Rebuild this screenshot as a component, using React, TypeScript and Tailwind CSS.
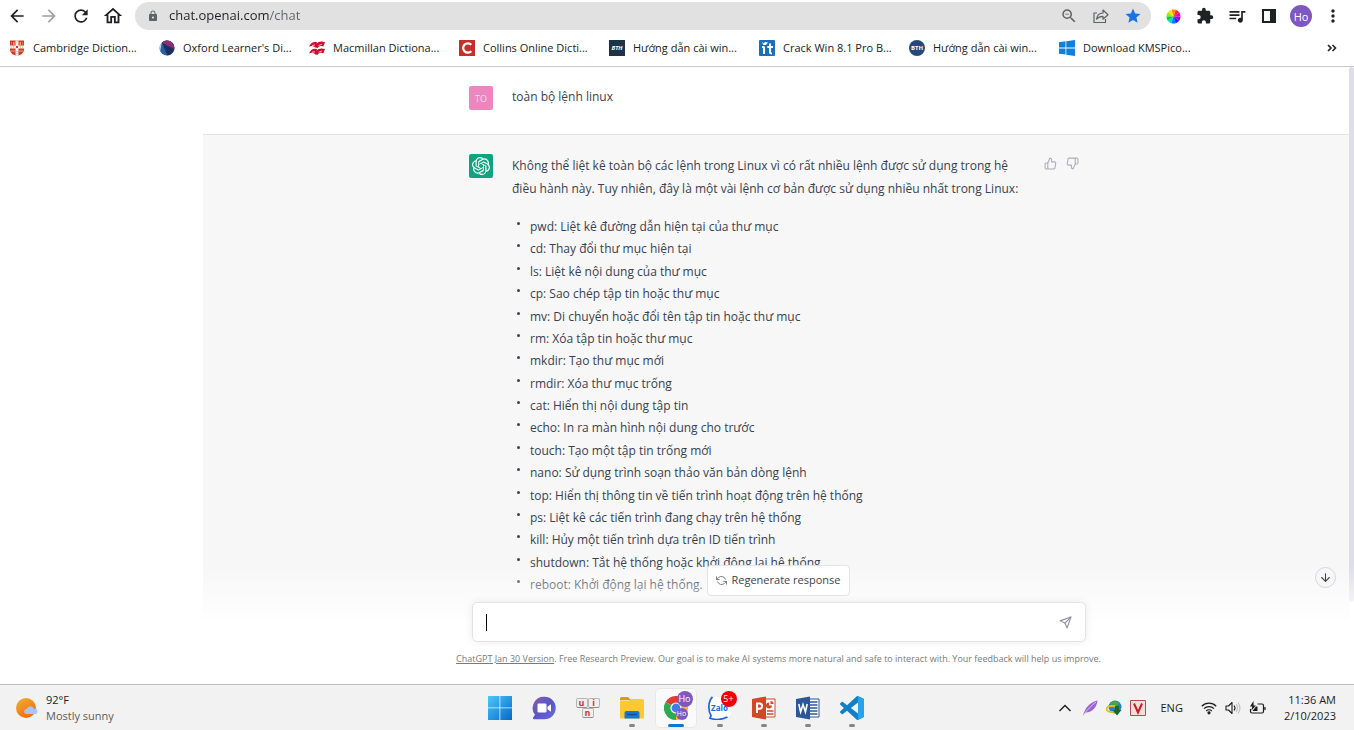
import type { ReactNode } from "react";
import {
  MdArrowBack,
  MdArrowForward,
  MdRefresh,
  MdOutlineHome,
  MdLock,
  MdStar,
  MdExtension,
  MdQueueMusic,
  MdMoreVert,
  MdZoomOut,
} from "react-icons/md";
import { FiThumbsUp, FiThumbsDown, FiSend, FiArrowDown, FiRefreshCw } from "react-icons/fi";

const OPENAI_PATH =
  "M22.2819 9.8211a5.9847 5.9847 0 0 0-.5157-4.9108 6.0462 6.0462 0 0 0-6.5098-2.9A6.0651 6.0651 0 0 0 4.9807 4.1818a5.9847 5.9847 0 0 0-3.9977 2.9 6.0462 6.0462 0 0 0 .7427 7.0966 5.98 5.98 0 0 0 .511 4.9107 6.051 6.051 0 0 0 6.5146 2.9001A5.9847 5.9847 0 0 0 13.2599 24a6.0557 6.0557 0 0 0 5.7718-4.2058 5.9894 5.9894 0 0 0 3.9977-2.9001 6.0557 6.0557 0 0 0-.7475-7.0729zm-9.022 12.6081a4.4755 4.4755 0 0 1-2.8764-1.0408l.1419-.0804 4.7783-2.7582a.7948.7948 0 0 0 .3927-.6813v-6.7369l2.02 1.1686a.071.071 0 0 1 .038.052v5.5826a4.504 4.504 0 0 1-4.4945 4.4944zm-9.6607-4.1254a4.4708 4.4708 0 0 1-.5346-3.0137l.142.0852 4.783 2.7582a.7712.7712 0 0 0 .7806 0l5.8428-3.3685v2.3324a.0804.0804 0 0 1-.0332.0615L9.74 19.9502a4.4992 4.4992 0 0 1-6.1408-1.6464zM2.3408 7.8956a4.485 4.485 0 0 1 2.3655-1.9728V11.6a.7664.7664 0 0 0 .3879.6765l5.8144 3.3543-2.0201 1.1685a.0757.0757 0 0 1-.071 0l-4.8303-2.7865A4.504 4.504 0 0 1 2.3408 7.872zm16.5963 3.8558L13.1038 8.364 15.1192 7.2a.0757.0757 0 0 1 .071 0l4.8303 2.7913a4.4944 4.4944 0 0 1-.6765 8.1042v-5.6772a.79.79 0 0 0-.407-.667zm2.0107-3.0231l-.142-.0852-4.7735-2.7818a.7759.7759 0 0 0-.7854 0L9.409 9.2297V6.8974a.0662.0662 0 0 1 .0284-.0615l4.8303-2.7866a4.4992 4.4992 0 0 1 6.6802 4.66zM8.3065 12.863l-2.02-1.1638a.0804.0804 0 0 1-.038-.0567V6.0742a4.4992 4.4992 0 0 1 7.3757-3.4537l-.142.0805L8.704 5.459a.7948.7948 0 0 0-.3927.6813zm1.0976-2.3654l2.602-1.4998 2.6069 1.4998v2.9994l-2.5974 1.4997-2.6067-1.4997Z";

const VSCODE_PATH =
  "M23.15 2.587L18.21.21a1.494 1.494 0 0 0-1.705.29l-9.46 8.63-4.12-3.128a.999.999 0 0 0-1.276.057L.327 7.261A1 1 0 0 0 .326 8.74L3.899 12 .326 15.26a1 1 0 0 0 .001 1.479L1.65 17.94a.999.999 0 0 0 1.276.057l4.12-3.128 9.46 8.63a1.492 1.492 0 0 0 1.704.29l4.942-2.377A1.5 1.5 0 0 0 24 20.06V3.939a1.5 1.5 0 0 0-.85-1.352zm-5.146 14.861L10.826 12l7.178-5.448v10.896z";

function CambridgeIcon() {
  return (
    <svg viewBox="0 0 16 16" className="size-4">
      <path d="M1 .5h14V9c0 4-3 6-7 7-4-1-7-3-7-7z" fill="#cf3a2c" />
      <path d="M2.5 2h3v3h-3zM10.500 2h3v3h-3zM2.500 10h3v2h-3zM10.500 10h3v2h-3z" fill="#eeb04a" />
      <path d="M3.500 2v3M12.500 2v3M4 10v2M12 10v2" stroke="#cf3a2c" />
      <path d="M6.500.500h3v5H15v3H9.500v7L8 16l-1.500-.5v-7H1v-3h5.500z" fill="#f6efec" />
      <path d="M8 1.500v2M8 11v3M2 7h3M11 7h3" stroke="#b9aaa8" strokeDasharray="1 1" />
      <path d="M7 6h2v2H7z" fill="#cf3a2c" />
    </svg>
  );
}

function OxfordIcon() {
  return (
    <svg viewBox="0 0 16 16" className="size-4">
      <circle cx="8" cy="8" r="7.500" fill="#2b5f9e" />
      <path d="M3 2.400A7.500 7.500 0 0 1 14.300 12L13 13z" fill="#6b2a6c" />
      <path d="M3 2.400 5 4l9 4 1.200-2.500A7.500 7.500 0 0 0 3 2.400z" fill="#8a2f74" />
      <path d="M5 4 13 13 14.500 9z" fill="#1c2d5c" />
      <path d="M3 2.400 8.500 15.500A7.500 7.500 0 0 0 13 13L5 4z" fill="#16305f" />
      <path d="M2.800 2.600a7.500 7.500 0 0 0-1.600 8.600z" fill="#b7d3ea" />
    </svg>
  );
}

function MacmillanIcon() {
  return (
    <svg viewBox="0 0 16 16" className="size-4" fill="#c8102e">
      <path d="M0 6.800C1.500 3 4 1.200 8 2.200L7.600 4C9.500 1.600 12 1 16 2.200L14.300 6.600C12 5.600 10.300 6 8.600 8L6.300 7.600C4.300 5.800 2 5.600 0 6.800z" />
      <path d="M0 13.600C1.500 9.800 4 8 8 9l-.4 1.800C9.500 8.400 12 7.800 16 9l-1.700 4.400c-2.300-1-4-.6-5.700 1.400l-2.300-.4C4.300 12.600 2 12.400 0 13.600z" />
      <path d="M3 5.400 6 5M9.500 5.600 13 4.200M3 12.200 6 11.800M9.500 12.400 13 11" stroke="#fff" strokeWidth=".7" />
    </svg>
  );
}

function CollinsIcon() {
  return (
    <svg viewBox="0 0 16 16" className="size-4">
      <path fill="#c62f29" d="M0 0h16v16H0z" />
      <path d="M12.300 4.800A4.700 4.700 0 1 0 12.300 11.200" fill="none" stroke="#fff" strokeWidth="2.200" />
    </svg>
  );
}

function BthSquareIcon() {
  return (
    <span className="flex size-4 items-center justify-center bg-[#1f3347] text-[6px] leading-none font-bold text-white italic">
      BTH
    </span>
  );
}

function BthRoundIcon() {
  return (
    <span className="flex size-4 items-center justify-center rounded-full bg-[#27497a] text-[6px] leading-none font-bold text-white">
      BTH
    </span>
  );
}

function CrackIcon() {
  return (
    <svg viewBox="0 0 16 16" className="size-4">
      <rect width="16" height="16" rx="1" fill="#1a6fb8" />
      <path d="M5 6.500V14M11 3.500V12q0 1.500 2 1.500M8.300 7H14M3 7h2" stroke="#fff" strokeWidth="2" fill="none" />
      <path d="M2.500 1.500 4.500 3.500 6 2l3 .5-2 2.500H4.500z" fill="#fff" />
    </svg>
  );
}

function Windows10Icon() {
  return (
    <svg viewBox="0 0 16 16" className="size-4" fill="#0f7fdc">
      <path d="M0 2.200 6.500 1.300v6.200H0zM7.300 1.200 16 0v7.500H7.300zM0 8.400h6.500v6.200L0 13.700zM7.300 8.400H16V16l-8.700-1.200z" />
    </svg>
  );
}

const bookmarks: { label: string; icon: ReactNode }[] = [
  { label: "Cambridge Diction...", icon: <CambridgeIcon /> },
  { label: "Oxford Learner's Di...", icon: <OxfordIcon /> },
  { label: "Macmillan Dictiona...", icon: <MacmillanIcon /> },
  { label: "Collins Online Dicti...", icon: <CollinsIcon /> },
  { label: "Hướng dẫn cài win...", icon: <BthSquareIcon /> },
  { label: "Crack Win 8.1 Pro B...", icon: <CrackIcon /> },
  { label: "Hướng dẫn cài win...", icon: <BthRoundIcon /> },
  { label: "Download KMSPico...", icon: <Windows10Icon /> },
];

function ToolButton({ label, children }: { label: string; children: ReactNode }) {
  return (
    <button type="button" aria-label={label} className="flex size-8 shrink-0 items-center justify-center">
      {children}
    </button>
  );
}

function ShareIcon() {
  return (
    <svg viewBox="0 0 18 18" className="size-[18px]" fill="none" stroke="#5f6368" strokeWidth="1.200">
      <path d="M5 6H2v9.500h11.500V12" />
      <path d="M4.500 12.200C5 8.500 7.500 6.200 11 6V3l5 4.700-5 4.500V9.300c-3 0-5 .9-6.500 2.900z" strokeLinejoin="round" />
    </svg>
  );
}

function ColorWheelIcon() {
  const colors = ["#f000c0", "#ff2a2a", "#ff8a00", "#ffe600", "#8cf000", "#00d42a", "#00d8d8", "#0078ff", "#2a1fff", "#9a00ff"];
  return (
    <svg viewBox="-8 -8 16 16" className="size-[15px]">
      {colors.map((color, i) => {
        const a = (i * Math.PI) / 5;
        const b = ((i + 1) * Math.PI) / 5;
        return (
          <path
            key={color}
            fill={color}
            d={`M0 0L${Math.cos(a) * 7.5} ${Math.sin(a) * -7.5}A7.500 7.500 0 0 0 ${Math.cos(b) * 7.5} ${Math.sin(b) * -7.5}z`}
          />
        );
      })}
    </svg>
  );
}

function BrowserHeader() {
  return (
    <header className="shrink-0 border-b border-[#c8c8c8] bg-white">
      <div className="flex h-8 items-center pr-[5px] pl-px text-[#202124]">
        <ToolButton label="Back">
          <MdArrowBack className="size-5" />
        </ToolButton>
        <ToolButton label="Forward">
          <MdArrowForward className="size-5 text-[#9aa0a6]" />
        </ToolButton>
        <ToolButton label="Reload">
          <MdRefresh className="size-5" />
        </ToolButton>
        <ToolButton label="Home">
          <MdOutlineHome className="size-[22px]" />
        </ToolButton>
        <div className="mx-1.5 flex h-7 min-w-0 flex-1 items-center rounded-full bg-[#e1e1e1] pr-0.5 pl-3">
          <MdLock className="size-3 shrink-0 text-[#5f6368]" />
          <input
            aria-label="Address"
            defaultValue="chat.openai.com/chat"
            className="ml-2.5 min-w-0 flex-1 bg-linear-to-r from-[#202124] from-[101px] to-[#5f6368] to-[101px] bg-clip-text text-[13px] text-transparent outline-none"
          />
          <ToolButton label="Zoom">
            <MdZoomOut className="size-[18px] text-[#5f6368]" />
          </ToolButton>
          <ToolButton label="Share this page">
            <ShareIcon />
          </ToolButton>
          <ToolButton label="Edit bookmark">
            <MdStar className="size-[18px] text-[#1a73e8]" />
          </ToolButton>
        </div>
        <ToolButton label="Color picker">
          <ColorWheelIcon />
        </ToolButton>
        <ToolButton label="Extensions">
          <MdExtension className="size-[18px]" />
        </ToolButton>
        <ToolButton label="Media controls">
          <MdQueueMusic className="size-5" />
        </ToolButton>
        <ToolButton label="Side panel">
          <svg viewBox="0 0 14 14" className="size-3.5">
            <path d="M0 0h14v14H0zM2 2v10h6V2z" fill="currentColor" fillRule="evenodd" />
          </svg>
        </ToolButton>
        <ToolButton label="Profile">
          <span className="flex size-[22px] items-center justify-center rounded-full bg-[#7e57c2] text-[11px] leading-none text-white">
            Ho
          </span>
        </ToolButton>
        <ToolButton label="More">
          <MdMoreVert className="size-5" />
        </ToolButton>
      </div>
      <nav aria-label="Bookmarks" className="flex h-[34px] items-center pr-[17px] pb-0.5 pl-[9px]">
        {bookmarks.map((b, i) => (
          <a key={i} href="#" className="flex w-[150px] shrink-0 items-center gap-2 text-[11px] whitespace-nowrap text-[#202124]">
            {b.icon}
            {b.label}
          </a>
        ))}
        <button type="button" aria-label="More bookmarks" className="ml-auto">
          <svg viewBox="0 0 10 8" className="h-2 w-2.5" fill="none" stroke="#202124" strokeWidth="1.600">
            <path d="m1 1 3 3-3 3M5.500 1l3 3-3 3" />
          </svg>
        </button>
      </nav>
    </header>
  );
}

const commands = [
  "pwd: Liệt kê đường dẫn hiện tại của thư mục",
  "cd: Thay đổi thư mục hiện tại",
  "ls: Liệt kê nội dung của thư mục",
  "cp: Sao chép tập tin hoặc thư mục",
  "mv: Di chuyển hoặc đổi tên tập tin hoặc thư mục",
  "rm: Xóa tập tin hoặc thư mục",
  "mkdir: Tạo thư mục mới",
  "rmdir: Xóa thư mục trống",
  "cat: Hiển thị nội dung tập tin",
  "echo: In ra màn hình nội dung cho trước",
  "touch: Tạo một tập tin trống mới",
  "nano: Sử dụng trình soạn thảo văn bản dòng lệnh",
  "top: Hiển thị thông tin về tiến trình hoạt động trên hệ thống",
  "ps: Liệt kê các tiến trình đang chạy trên hệ thống",
  "kill: Hủy một tiến trình dựa trên ID tiến trình",
  "shutdown: Tắt hệ thống hoặc khởi động lại hệ thống",
  "reboot: Khởi động lại hệ thống.",
];

function Conversation() {
  return (
    <div className="min-w-0 flex-1 text-[12px] leading-[23px] text-[#374151]">
      <section className="border-b border-[#e2e2e2] pt-[19px] pb-6">
        <div className="mx-auto flex max-w-[614px] gap-[19px]">
          <div className="flex size-6 shrink-0 items-center justify-center rounded-xs bg-[#ec86bf] text-[9px] leading-none text-[#fbdcee]">
            TO
          </div>
          <p className="leading-[22px]">toàn bộ lệnh linux</p>
        </div>
      </section>
      <section className="bg-[#f7f7f7] pt-[19px] pb-40">
        <div className="mx-auto flex max-w-[614px]">
          <div className="mr-[19px] flex size-6 shrink-0 items-center justify-center rounded-xs bg-[#10a37f]">
            <svg viewBox="0 0 24 24" className="size-[18px]" fill="#fff">
              <path d={OPENAI_PATH} />
            </svg>
          </div>
          <div className="min-w-0 flex-1">
            <p>
              Không thể liệt kê toàn bộ các lệnh trong Linux vì có rất nhiều lệnh được sử dụng trong hệ
              <br />
              điều hành này. Tuy nhiên, đây là một vài lệnh cơ bản được sử dụng nhiều nhất trong Linux:
            </p>
            <ul className="mt-4 flex h-[380px] flex-col justify-between pl-[5px] leading-[22px]">
              {commands.map((c) => (
                <li key={c} className="flex gap-2.5">
                  <span className="mt-1.5 size-[3px] shrink-0 rounded-full bg-[#374151]" />
                  {c}
                </li>
              ))}
            </ul>
          </div>
          <div className="mt-[3px] mr-1 ml-4 flex items-start gap-[9px] text-[#acacbe]">
            <button type="button" aria-label="Good response">
              <FiThumbsUp className="size-[13px]" />
            </button>
            <button type="button" aria-label="Bad response">
              <FiThumbsDown className="size-[13px]" />
            </button>
          </div>
        </div>
      </section>
    </div>
  );
}

function Composer() {
  return (
    <div className="absolute inset-x-0 bottom-0 flex flex-col items-center bg-linear-to-b from-white/0 from-12% to-white to-55% pb-[17px]">
      <button
        type="button"
        className="mt-4 mb-1.5 flex h-[31px] items-center gap-1 rounded border border-[#e3e3e8] bg-white px-2 text-[11px] text-[#40414f]"
      >
        <FiRefreshCw className="size-[11px] -scale-x-100 text-[#6e6e80]" />
        Regenerate response
      </button>
      <div className="relative flex h-10 w-full max-w-[614px] items-center rounded-[5px] border border-[#e3e3e3] bg-white pr-[13px] pl-[13px] shadow-[0_0_8px_rgba(0,0,0,0.08)]">
        <textarea aria-label="Message" rows={1} className="h-5 flex-1 resize-none text-[12px] leading-5 outline-none" />
        <span className="absolute top-[11px] left-[13px] h-[17px] w-px bg-black" />
        <button type="button" aria-label="Send">
          <FiSend className="size-[13px] text-[#8e8ea0]" />
        </button>
      </div>
      <p className="mt-2 text-center text-[9px] leading-[17px] text-[#7a7a7a]">
        <a href="#" className="underline">
          ChatGPT Jan 30 Version
        </a>
        . Free Research Preview. Our goal is to make AI systems more natural and safe to interact with. Your feedback will help us
        improve.
      </p>
      <button
        type="button"
        aria-label="Scroll to bottom"
        className="absolute right-[18px] bottom-24 flex size-[21px] items-center justify-center rounded-full border border-[#d5d5de] bg-[#f7f7f8] text-[#40414f]"
      >
        <FiArrowDown className="size-[13px]" />
      </button>
    </div>
  );
}

function StartIcon() {
  return (
    <svg viewBox="0 0 24 24" className="size-6">
      <defs>
        <linearGradient id="start" x1="0" y1="0" x2="1" y2="1">
          <stop offset="0" stopColor="#4cc9fb" />
          <stop offset="1" stopColor="#0568c8" />
        </linearGradient>
      </defs>
      <path d="M0 0h11.500v11.500H0zM12.300 0H24v11.500H12.300zM0 12.300h11.500V24H0zM12.300 12.300H24V24H12.300z" fill="url(#start)" />
    </svg>
  );
}

function MeetIcon() {
  return (
    <svg viewBox="0 0 24 24" className="size-6">
      <defs>
        <linearGradient id="meet" x1="0" y1="0" x2="1" y2="1">
          <stop offset="0" stopColor="#8a5fa8" />
          <stop offset=".5" stopColor="#5a55c8" />
          <stop offset="1" stopColor="#6a6ae0" />
        </linearGradient>
      </defs>
      <path d="M12.500.8a11.200 11.200 0 1 1 0 22.400H1.800q-1.500-.6-.5-2l1.700-2.400A11.200 11.200 0 0 1 12.500.8z" fill="url(#meet)" />
      <rect x="5.500" y="7.500" width="9" height="9" rx="1.200" fill="#fff" />
      <path d="m15.500 10.800 3.500-2.500v7.400l-3.500-2.500z" fill="#fff" />
    </svg>
  );
}

function UnikeyIcon() {
  return (
    <span className="grid w-6 grid-cols-4 text-center text-[9px] leading-[8px] font-bold text-[#d93636]">
      <span className="col-span-2 rounded-xs border border-[#b5b5b5] border-b-[#8c8c8c] bg-[#efefef]">u</span>
      <span className="col-span-2 rounded-xs border border-[#b5b5b5] border-b-[#8c8c8c] bg-[#efefef]">i</span>
      <span className="col-span-2 col-start-2 rounded-xs border border-[#b5b5b5] border-b-[#8c8c8c] bg-[#efefef]">n</span>
    </span>
  );
}

function FolderIcon() {
  return (
    <svg viewBox="0 0 24 24" className="size-6">
      <path d="M0 2.500Q0 1 1.500 1H8l3 3H0z" fill="#d99a0b" />
      <path d="M0 4.500h9L11 3h11.500Q24 3 24 4.500v17q0 1-1 1H1q-1 0-1-1z" fill="#fcc934" />
      <path d="M4.500 22.500V17q0-2 2-2h11q2 0 2 2v5.500z" fill="#1479d2" />
      <path d="M7 18.500h10" stroke="#0b519c" strokeWidth="1.500" />
    </svg>
  );
}

function ChromeIcon() {
  return (
    <span className="relative size-6">
      <svg viewBox="0 0 24 24" className="size-6">
        <path d="M12 12 1.600 6A12 12 0 0 1 22.400 6z" fill="#e33b2e" />
        <path d="M12 12V24A12 12 0 0 1 1.600 6z" fill="#2da94f" />
        <path d="M12 12 22.400 6A12 12 0 0 1 12 24z" fill="#fdbd00" />
        <path d="M12 6.500h10.700L12 12z" fill="#e33b2e" />
        <circle cx="12" cy="12" r="5.600" fill="#fff" />
        <circle cx="12" cy="12" r="4.400" fill="#3f7de8" />
      </svg>
      <span className="absolute -top-[5px] left-[13px] flex size-4 items-center justify-center rounded-full bg-[#7e57c2] text-[9px] leading-none text-white">
        Ho
      </span>
      <span className="absolute top-3 left-3 flex size-3 items-center justify-center rounded-full bg-[#7e57c2] text-[7px] leading-none text-white">
        Ho
      </span>
    </span>
  );
}

function ZaloIcon() {
  return (
    <span className="relative flex size-6 items-center justify-center">
      <svg viewBox="0 0 24 24" className="absolute inset-0 size-6">
        <rect x="1" y="1" width="22.500" height="21" rx="7" fill="#fff" />
        <path d="M4.500 1C0 5 0 15 3 19.500L2 22.300q9 3 17.500-1.300" fill="none" stroke="#1668e8" strokeWidth="1.700" />
      </svg>
      <span className="relative text-[8px] leading-none font-bold text-[#1668e8]">Zalo</span>
      <span className="absolute -top-[5px] left-[13px] flex size-4 items-center justify-center rounded-full bg-[#f40000] text-[9px] leading-none text-white">
        5+
      </span>
    </span>
  );
}

function PowerPointIcon() {
  return (
    <svg viewBox="0 0 24 24" className="size-6">
      <path d="M12 3h11v18H12z" fill="#fff" stroke="#d24726" />
      <path d="M17 6.500a3 3 0 1 0 3 3h-3z" fill="#d24726" />
      <path d="M18.500 5v3h3a3 3 0 0 0-3-3z" fill="#d24726" />
      <path d="M15 15h6.500M15 18h6.500" stroke="#d24726" strokeWidth="1.300" />
      <path d="M0 3 14 .5v23L0 21z" fill="#d24726" />
      <path d="M5 17V7.500h2.500a2.600 2.600 0 0 1 0 5.200H5" fill="none" stroke="#fff" strokeWidth="2" />
    </svg>
  );
}

function WordIcon() {
  return (
    <svg viewBox="0 0 24 24" className="size-6">
      <path d="M12 3h11v18H12z" fill="#fff" stroke="#2b579a" />
      <path d="M14 6h7.500M14 9h7.500M14 12h7.500M14 15h7.500M14 18h7.500" stroke="#2b579a" strokeWidth="1.300" />
      <path d="M0 3 14 .5v23L0 21z" fill="#2b579a" />
      <path d="m2.800 8 1.800 8L7 8.500 9.400 16l1.800-8" fill="none" stroke="#fff" strokeWidth="1.600" />
    </svg>
  );
}

function VsCodeIcon() {
  return (
    <svg viewBox="0 0 24 24" className="size-6">
      <path d={VSCODE_PATH} fill="#1180c8" />
      <path d="M18 .2 23.150 2.600q.85.400.85 1.400v16q0 1-.85 1.400L18 23.800z" fill="#27a3ee" />
    </svg>
  );
}

const apps: { label: string; icon: ReactNode; state: "none" | "open" | "active" }[] = [
  { label: "Start", icon: <StartIcon />, state: "none" },
  { label: "Chat", icon: <MeetIcon />, state: "none" },
  { label: "UniKey", icon: <UnikeyIcon />, state: "none" },
  { label: "File Explorer", icon: <FolderIcon />, state: "open" },
  { label: "Chrome", icon: <ChromeIcon />, state: "active" },
  { label: "Zalo", icon: <ZaloIcon />, state: "open" },
  { label: "PowerPoint", icon: <PowerPointIcon />, state: "open" },
  { label: "Word", icon: <WordIcon />, state: "open" },
  { label: "Visual Studio Code", icon: <VsCodeIcon />, state: "open" },
];

const cellStyle = {
  none: "",
  open: "",
  active: "rounded bg-[#fafafa] ring-1 ring-[#e8e8e8]",
};

const markStyle = {
  none: "w-1.5 bg-transparent",
  open: "w-1.5 bg-[#858585]",
  active: "w-4 bg-[#0a78d4]",
};

function WeatherIcon() {
  return (
    <svg viewBox="0 0 22 20" className="h-5 w-[22px]">
      <defs>
        <linearGradient id="sun" x1="0" y1="0" x2=".6" y2="1">
          <stop offset="0" stopColor="#f0b430" />
          <stop offset="1" stopColor="#f4690f" />
        </linearGradient>
      </defs>
      <circle cx="10" cy="10" r="10" fill="url(#sun)" />
      <path d="M10.500 16a2.500 2.500 0 0 1 .3-5 3.700 3.700 0 0 1 7-.3 2.700 2.700 0 0 1 1.700 5.300z" fill="#a9c4f5" />
    </svg>
  );
}

function Tray() {
  return (
    <div className="flex items-center justify-end pr-[15px] text-[11px] text-[#1c1c1c]">
      <button type="button" aria-label="Show hidden icons">
        <svg viewBox="0 0 14 8" className="h-2 w-3.5" fill="none" stroke="currentColor" strokeWidth="1.400">
          <path d="m1.500 7 5.500-5.500L12.500 7" />
        </svg>
      </button>
      <svg viewBox="0 0 16 16" className="ml-2.5 size-4">
        <path d="M1 15.500C3 8 8 2 15.500.5 15 7 10 12.500 4 12.500z" fill="#9a63cf" />
        <path d="M1 15.500C5 10 9 6 14 2" stroke="#dcc4f2" fill="none" />
      </svg>
      <svg viewBox="0 0 16 16" className="ml-2 size-4">
        <circle cx="9" cy="7" r="6.500" fill="#287fc4" />
        <path d="M4 3q5-4 9 0l-3 4-5-1z" fill="#45a83c" />
        <ellipse cx="6" cy="9" rx="5.500" ry="3" fill="none" stroke="#e8b820" strokeWidth="1.800" />
        <path d="M9 6h4v4h2.500L11 15.500 6.500 10H9z" fill="#176b25" />
      </svg>
      <svg viewBox="0 0 16 16" className="ml-2 size-4">
        <path d="M.5.500h15v15H.5z" fill="#f3dede" stroke="#b44c4c" />
        <path d="m4 3.500 4 9 4-9" fill="none" stroke="#c81e1e" strokeWidth="2" />
      </svg>
      <span className="ml-3.5 pt-0.5">ENG</span>
      <svg viewBox="0 0 16 14" className="ml-[18px] h-3.5 w-4" fill="none" stroke="currentColor" strokeWidth="1.200">
        <path d="M.8 5.200a10.200 10.200 0 0 1 14.400 0M3 7.700a7 7 0 0 1 10 0M5.200 10a4 4 0 0 1 5.600 0" />
        <circle cx="8" cy="11.800" r="1" fill="currentColor" />
      </svg>
      <svg viewBox="0 0 16 14" className="ml-2 h-3.5 w-4" fill="none" stroke="currentColor" strokeWidth="1.100">
        <path d="M1 5h2.500L7 1.500v11L3.500 9H1z" strokeLinejoin="round" />
        <path d="M9 4.500q2 2.500 0 5" />
        <path d="M11 3q3 4 0 8M13 1.500q4 5.500 0 11" stroke="#bdbdbd" />
      </svg>
      <svg viewBox="0 0 17 14" className="ml-2 h-3.5 w-[17px]" fill="none" stroke="currentColor" strokeWidth="1.200">
        <path d="M8.500 3H13q1.500 0 1.500 1.500v6Q14.500 12 13 12H3q-1.500 0-1.500-1.500V8M16 6v3" />
        <path d="M4.500 0 1 5.500h2.300l-1 4L7 4.500H4.600z" fill="currentColor" stroke="none" />
        <path d="M7 5.500h1.500v4.500H3.500z" fill="currentColor" stroke="none" />
      </svg>
      <div className="ml-[18px] text-right leading-4">
        <div>11:36 AM</div>
        <div>2/10/2023</div>
      </div>
    </div>
  );
}

function Taskbar() {
  return (
    <footer className="grid h-[46px] shrink-0 grid-cols-[1fr_auto_1fr] items-center border-t border-[#bdbdbd] bg-[#f2f2f2] pr-[3px]">
      <div className="flex items-center gap-2 pl-4 text-[11px] leading-4">
        <WeatherIcon />
        <div>
          <div className="text-[#1c1c1c]">92°F</div>
          <div className="text-[#5c5c5c]">Mostly sunny</div>
        </div>
      </div>
      <div className="flex gap-1">
        {apps.map((a) => (
          <button
            key={a.label}
            type="button"
            aria-label={a.label}
            className={`flex h-[38px] w-10 flex-col items-center justify-between pt-[7px] ${cellStyle[a.state]}`}
          >
            <span className="flex h-6 items-center">{a.icon}</span>
            <span className={`h-[3px] rounded-full ${markStyle[a.state]}`} />
          </button>
        ))}
      </div>
      <Tray />
    </footer>
  );
}

export default function App() {
  return (
    <div className="flex h-screen flex-col overflow-hidden bg-white font-['Open_Sans','Noto_Sans',sans-serif]">
      <BrowserHeader />
      <main className="flex min-h-0 flex-1">
        <aside className="w-[203px] shrink-0" />
        <div className="relative flex min-w-0 flex-1 overflow-hidden">
          <Conversation />
          <div className="w-[5px] shrink-0 pb-[82px]">
            <div className="h-full rounded-full bg-[#dedee8]" />
          </div>
          <Composer />
        </div>
      </main>
      <Taskbar />
    </div>
  );
}
